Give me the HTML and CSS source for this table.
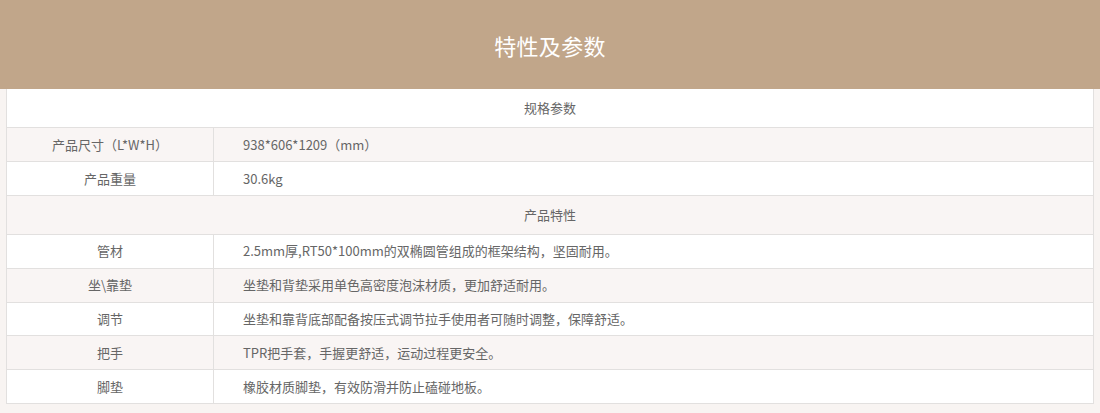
FILE: index.html
```html
<!DOCTYPE html>
<html lang="zh">
<head>
<meta charset="utf-8">
<link rel="stylesheet" href="styles.css">
</head>
<body>
<header class="banner"><h1 class="banner-title">特性及参数</h1></header>
<div class="wrap">
<table class="spec">
<tbody>
<tr class="sec"><td colspan="2">规格参数</td></tr>
<tr><td class="k">产品尺寸（L*W*H）</td><td class="v">938*606*1209（mm）</td></tr>
<tr><td class="k">产品重量</td><td class="v">30.6kg</td></tr>
<tr class="sec"><td colspan="2">产品特性</td></tr>
<tr class="f"><td class="k">管材</td><td class="v">2.5mm厚,RT50*100mm的双椭圆管组成的框架结构，坚固耐用。</td></tr>
<tr class="f"><td class="k">坐\靠垫</td><td class="v">坐垫和背垫采用单色高密度泡沫材质，更加舒适耐用。</td></tr>
<tr class="f"><td class="k">调节</td><td class="v">坐垫和靠背底部配备按压式调节拉手使用者可随时调整，保障舒适。</td></tr>
<tr class="f"><td class="k">把手</td><td class="v">TPR把手套，手握更舒适，运动过程更安全。</td></tr>
<tr class="f"><td class="k">脚垫</td><td class="v">橡胶材质脚垫，有效防滑并防止磕碰地板。</td></tr>
</tbody>
</table>
</div>
</body>
</html>
```
FILE: styles.css
```css
html, body { margin: 0; padding: 0; }
body {
  background: #f8f4f2;
  font-family: "Noto Sans CJK SC", "Noto Sans", sans-serif;
  color: #666;
  width: 1100px;
  height: 413px;
  overflow: hidden;
}
.banner {
  background: #c1a68a;
  height: 89px;
  display: flex;
  align-items: center;
  justify-content: center;
}
.banner-title {
  margin: 0;
  color: #fff;
  font-size: 22px;
  font-weight: 400;
  letter-spacing: 0.3px;
}
.wrap {
  padding: 0 6px;
}
.spec {
  width: 100%;
  border-collapse: collapse;
  border: 1px solid #e2e0df;
  border-top: none;
  font-size: 13px;
  line-height: 18px;
}
.spec td {
  border: 1px solid #e2e0df;
  padding: 0;
  height: 33px;
}
.spec tr.f td { height: 32.8px; }
.spec tr:first-child td { border-top: none; }
.spec tr:nth-child(odd) td { background: #fff; }
.spec tr:nth-child(even) td { background: #f9f5f4; }
.spec tr.sec td {
  height: 38px;
  text-align: center;
}
.spec td.k {
  width: 206px;
  text-align: center;
}
.spec td.v {
  padding-left: 29px;
}
```
